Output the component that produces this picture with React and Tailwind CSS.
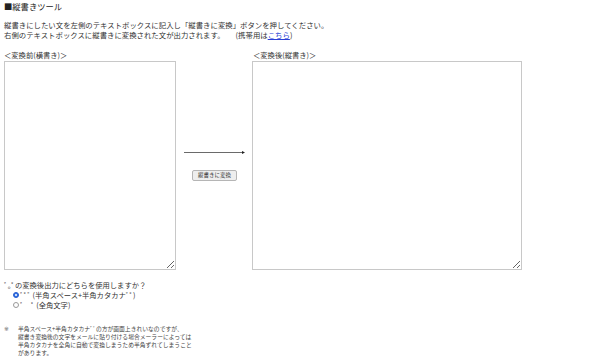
import React from "react";

const jp = { fontFamily: '"Noto Sans CJK JP", "Noto Sans", sans-serif' };

function Arrow() {
  return (
    <svg width="62" height="5" viewBox="0 0 62 5" className="block">
      <line x1="0" y1="2.5" x2="59" y2="2.5" stroke="#444" strokeWidth="0.8" />
      <path d="M58 1 L61 2.5 L58 4 Z" fill="#222" />
    </svg>
  );
}

export default function App() {
  return (
    <div className="w-[600px] h-[357px] bg-white text-[#333] overflow-hidden px-[4px] pt-[1px]" style={jp}>
      <div className="text-[8.3px] leading-[10px] text-[#222]">■縦書きツール</div>
      <div className="mt-[8.5px] text-[7.4px] leading-[10px]">
        <div>縦書きにしたい文を左側のテキストボックスに記入し「縦書きに変換」ボタンを押してください。</div>
        <div>
          右側のテキストボックスに縦書きに変換された文が出力されます。　　(携帯用は
          <a className="text-[#2a3fd6] underline">こちら</a>)
        </div>
      </div>
      <div className="mt-[10px] flex items-start">
        <div className="flex flex-col">
          <div className="text-[7.3px] leading-[10px]">＜変換前(横書き)＞</div>
          <textarea className="mt-[1.5px] w-[172px] h-[209px] border border-[#c8c8c8] bg-white resize" />
        </div>
        <div className="w-[76px] h-[209px] mt-[11.5px] flex flex-col items-center justify-center pl-[8px] pr-[7px]">
          <Arrow />
          <button className="mt-[15px] w-[45px] h-[11px] bg-[#eeeeee] border border-[#b5b5b5] rounded-[2px] text-[5.5px] leading-[9px] text-[#333] p-0">
            縦書きに変換
          </button>
        </div>
        <div className="flex flex-col">
          <div className="text-[7.3px] leading-[10px] pl-[1px]">＜変換後(縦書き)＞</div>
          <textarea className="mt-[1.5px] w-[270px] h-[209px] border border-[#c8c8c8] bg-white resize" />
        </div>
      </div>
      <div className="mt-[10px] text-[7.3px] leading-[10px]">
        <div>ﾞ｡ﾟの変換後出力にどちらを使用しますか？</div>
        <div className="pl-[9px] flex items-center">
          <span className="inline-flex w-[6px] h-[6px] rounded-full bg-[#2f6fe6] border border-[#2a5fcc] items-center justify-center mr-[1px]">
            <span className="block w-[2px] h-[2px] rounded-full bg-white" />
          </span>
          <span>ﾞﾟﾞ (半角スペース+半角カタカナﾞﾟ)</span>
        </div>
        <div className="pl-[9px] flex items-center">
          <span className="inline-block w-[6px] h-[6px] rounded-full bg-white border border-[#999] mr-[1px]" />
          <span>ﾞ　ﾟ (全角文字)</span>
        </div>
      </div>
      <div className="mt-[15px] text-[5.8px] leading-[8px] text-[#444] flex">
        <div className="w-[14px] text-[#555]" style={{ fontFamily: '"DejaVu Sans", sans-serif' }}>※</div>
        <div>
          <div>半角スペース+半角カタカナﾞﾟの方が画面上きれいなのですが、</div>
          <div>縦書き変換後の文字をメールに貼り付ける場合メーラーによっては</div>
          <div>半角カタカナを全角に自動で変換しまうため半角ずれてしまうこと</div>
          <div>があります。</div>
        </div>
      </div>
    </div>
  );
}
